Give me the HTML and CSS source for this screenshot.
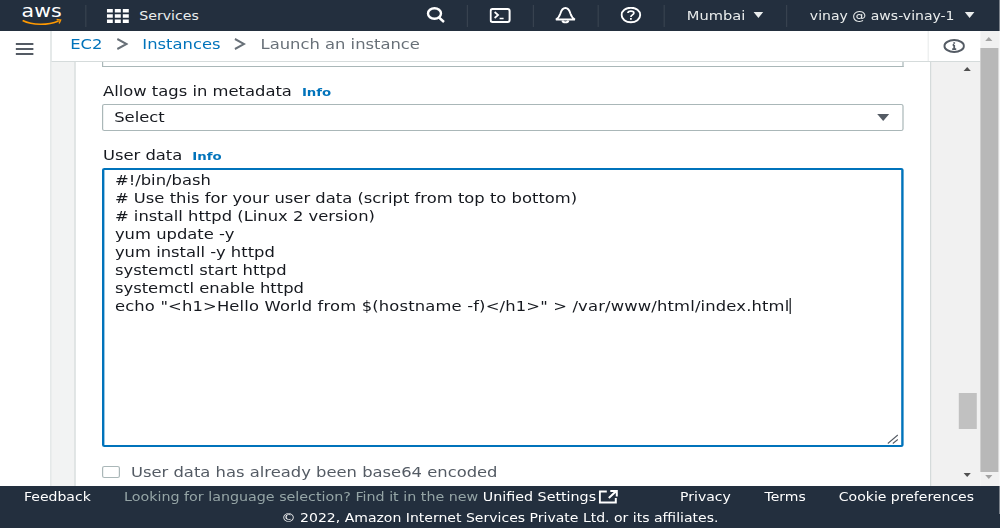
FILE: index.html
```html
<!DOCTYPE html>
<html lang="en">
<head>
<meta charset="utf-8">
<title>Launch an instance</title>
<link rel="stylesheet" href="styles.css">
</head>
<body>
<div class="app">
  <header class="topbar">
    <div class="cell logo-cell">
      <svg class="aws" viewBox="0 0 42 24" width="35" height="24" preserveAspectRatio="none">
        <text x="0" y="13" class="aws-text" textLength="40" lengthAdjust="spacingAndGlyphs">aws</text>
        <path d="M1 16.500c10 5 25 5 36 .5" fill="none" stroke="#f90" stroke-width="1.600"/>
        <path d="M35 15.500l4 .5-1.500 3.500" fill="none" stroke="#f90" stroke-width="1.400"/>
      </svg>
    </div>
    <div class="cell services-cell">
      <svg viewBox="0 0 22 14" width="18.330" height="14" preserveAspectRatio="none" fill="#fff">
        <rect x="0" y="0" width="6" height="3.500"/><rect x="8" y="0" width="6" height="3.500"/><rect x="16" y="0" width="6" height="3.500"/>
        <rect x="0" y="5.250" width="6" height="3.500"/><rect x="8" y="5.250" width="6" height="3.500"/><rect x="16" y="5.250" width="6" height="3.500"/>
        <rect x="0" y="10.500" width="6" height="3.500"/><rect x="8" y="10.500" width="6" height="3.500"/><rect x="16" y="10.500" width="6" height="3.500"/>
      </svg>
      <span class="services">Services</span>
    </div>
    <div class="cell search-cell">
      <svg viewBox="0 0 20 18" width="16.670" height="18" preserveAspectRatio="none" fill="none" stroke="#fff" stroke-width="2.400">
        <ellipse cx="8.500" cy="6.500" rx="6.500" ry="5.300"/><path d="M13 10.500l5 4.500"/>
      </svg>
    </div>
    <div class="cell icon-cell">
      <svg viewBox="0 0 21 16" width="17.500" height="16" preserveAspectRatio="none" fill="none" stroke="#fff" stroke-width="2">
        <rect x="1" y="1" width="19" height="13" rx="2"/><path d="M5 4l3.500 3-3.500 3M10 10.500h4" stroke-width="1.700"/>
      </svg>
    </div>
    <div class="cell icon-cell">
      <svg viewBox="0 0 22 18" width="18.330" height="18" preserveAspectRatio="none" fill="none" stroke="#fff" stroke-width="1.900">
        <path d="M1.500 12.500c2-1 3.500-3 4.500-6 1-3.500 3-5.500 5-5.500s4 2 5 5.500c1 3 2.500 5 4.500 6z"/><path d="M8 13.500c.4 2.500 5.600 2.500 6 0"/>
      </svg>
    </div>
    <div class="cell icon-cell">
      <svg viewBox="0 0 21 18" width="17.500" height="18" preserveAspectRatio="none" fill="none" stroke="#fff" stroke-width="1.900">
        <ellipse cx="10.500" cy="8" rx="9.300" ry="7.300"/><path d="M7.500 6c0-2.600 6-2.600 6 0 0 2-3 1.800-3 4" stroke-width="1.700"/><path d="M10.500 11v1.700" stroke-width="1.800"/>
      </svg>
    </div>
    <div class="cell region-cell">
      <span>Mumbai</span><span class="caret"></span>
    </div>
    <div class="cell user-cell">
      <span>vinay @ aws-vinay-1</span><span class="caret"></span>
    </div>
  </header>

  <div class="middle">
    <aside class="sidenav">
      <svg viewBox="0 0 20 12" width="15.830" height="12" preserveAspectRatio="none" stroke="#545b64" stroke-width="1.800">
        <path d="M0 1h19M0 6h19M0 11h19"/>
      </svg>
    </aside>
    <div class="workspace">
      <nav class="crumbbar">
        <div class="crumbs">
          <a>EC2</a>
          <svg viewBox="0 0 13 12" width="10" height="12" preserveAspectRatio="none" fill="none" stroke="#687078" stroke-width="2"><path d="M1 1l10 5-10 5"/></svg>
          <a>Instances</a>
          <svg viewBox="0 0 13 12" width="10" height="12" preserveAspectRatio="none" fill="none" stroke="#687078" stroke-width="2"><path d="M1 1l10 5-10 5"/></svg>
          <span>Launch an instance</span>
        </div>
        <div class="info-cell">
          <svg viewBox="0 0 22 14" width="18.330" height="14" preserveAspectRatio="none" fill="none" stroke="#545b64" stroke-width="2">
            <ellipse cx="11" cy="7" rx="9.800" ry="5.900"/><path d="M11 6v4M9 10.200h4M9.500 6H11M11 3.300v1.400" stroke-width="1.800"/>
          </svg>
        </div>
      </nav>
      <div class="content-row">
        <div class="gutter"></div>
        <main class="panel">
          <div class="prev-input"></div>
          <div class="field">
            <div class="label">Allow tags in metadata<a class="info">Info</a></div>
            <div class="select"><span>Select</span><span class="select-caret"></span></div>
          </div>
          <div class="field">
            <div class="label">User data<a class="info">Info</a></div>
            <div class="textarea">
              <div class="line">#!/bin/bash</div>
              <div class="line"># Use this for your user data (script from top to bottom)</div>
              <div class="line"># install httpd (Linux 2 version)</div>
              <div class="line">yum update -y</div>
              <div class="line">yum install -y httpd</div>
              <div class="line">systemctl start httpd</div>
              <div class="line">systemctl enable httpd</div>
              <div class="line long">echo "&lt;h1&gt;Hello World from $(hostname -f)&lt;/h1&gt;" &gt; /var/www/html/index.html<span class="text-caret"></span></div>
              <svg class="resize" viewBox="0 0 12 10" width="10" height="10" preserveAspectRatio="none" stroke="#545b64" stroke-width="1"><path d="M1 9.500L11 1M6 9.500L11 5.500"/></svg>
            </div>
          </div>
          <label class="check"><span class="box"></span>User data has already been base64 encoded</label>
        </main>
        <div class="inner-scroll">
          <span class="arrow-up"></span>
          <span class="thumb"></span>
          <span class="arrow-down"></span>
        </div>
      </div>
    </div>
    <div class="outer-scroll">
      <span class="arrow-up light"></span>
      <span class="outer-thumb"></span>
      <span class="arrow-down light"></span>
    </div>
  </div>

  <footer class="footer">
    <div class="foot-row">
      <a class="feedback">Feedback</a>
      <span class="lang">Looking for language selection? Find it in the new <b>Unified Settings</b></span>
      <svg class="ext" viewBox="0 0 19 14" width="15.830" height="14" preserveAspectRatio="none" fill="none" stroke="#fff" stroke-width="2"><path d="M8 1.500H1v11h16V8M10 8l7-6.500M11.500 1H18v5.500"/></svg>
      <a class="privacy">Privacy</a>
      <a class="terms">Terms</a>
      <a class="cookies">Cookie preferences</a>
    </div>
    <div class="copy">© 2022, Amazon Internet Services Private Ltd. or its affiliates.</div>
  </footer>
</div>
</body>
</html>
```

FILE: styles.css
```css
* { box-sizing: border-box; }
html, body { margin: 0; height: 100%; overflow: hidden; }
body { font-family: "DejaVu Sans", sans-serif; font-size: 13.650px; color: #16191f; background: #fff; }

/* The reference is stretched 1.2x horizontally: lay out at 833.33px and widen. */
.app { width: 833.330px; height: 528px; display: flex; flex-direction: column; transform: scaleX(1.2); transform-origin: left top; }

.topbar { height: 31px; flex: none; background: #232f3e; color: #eaeded; display: flex; align-items: center; font-size: 11.800px; }
.cell { display: flex; align-items: center; height: 22px; border-left: 1px solid #37424f; }
.logo-cell { width: 70.830px; padding-left: 18.330px; border-left: 0; }
.aws { overflow: visible; }
.aws-text { font-family: "DejaVu Sans", sans-serif; font-size: 17px; fill: #fff; }
.services-cell { width: 284.170px; padding-left: 17.500px; gap: 8.330px; }
.search-cell { width: 34.170px; border-left: 0; }
.icon-cell { width: 54.580px; justify-content: center; }
.region-cell { width: 102.500px; padding-left: 18.500px; gap: 6.670px; font-size: 12.200px; }
.user-cell { flex: 1; padding-left: 18.500px; gap: 8.330px; font-size: 11.700px; }
.caret { width: 0; height: 0; margin-bottom: 1px; border-left: 4.580px solid transparent; border-right: 4.580px solid transparent; border-top: 6px solid #eaeded; }

.middle { flex: 1; min-height: 0; display: flex; }
.sidenav { width: 42.500px; flex: none; border-right: 1px solid #d5dbdb; padding: 11px 0 0 12.500px; }
.workspace { flex: 1; min-width: 0; display: flex; flex-direction: column; }
.crumbbar { height: 31px; flex: none; display: flex; justify-content: space-between; border-bottom: 1px solid #d5dbdb; }
.crumbs { display: flex; align-items: center; gap: 11.670px; padding: 0 0 4px 16px; color: #687078; }
.crumbs a { color: #0073bb; }
.info-cell { width: 44.170px; border-left: 1px solid #eaeded; display: flex; align-items: center; justify-content: center; }

.content-row { flex: 1; min-height: 0; display: flex; }
.gutter { width: 20.830px; flex: none; background: #f2f3f3; border-right: 1px solid #d5dbdb; }
.panel { flex: 1; min-width: 0; padding: 0 21.670px; }
.prev-input { height: 5px; border: 1px solid #aab7b8; border-top: 0; }
.field { margin-top: 15px; }
.label { height: 18px; line-height: 18px; padding-left: 0.800px; display: flex; align-items: baseline; }
.info { color: #0073bb; font-size: 11.100px; font-weight: 700; margin-left: 8.330px; }
.select { margin-top: 4px; height: 27px; border: 1px solid #aab7b8; border-radius: 2px; display: flex; align-items: center; justify-content: space-between; padding: 0 11.670px 2px 9.170px; }
.select-caret { width: 0; height: 0; margin-top: 2px; border-left: 5.830px solid transparent; border-right: 5.830px solid transparent; border-top: 7px solid #545b64; }
.textarea { position: relative; margin-top: 4px; height: 279px; border: 2px solid #0073bb; border-radius: 2px; padding: 1px 8.800px; line-height: 18px; }
.line { white-space: nowrap; }
.long { letter-spacing: 0.130px; }
.text-caret { display: inline-block; width: 1.200px; height: 16px; background: #16191f; vertical-align: -3px; }
.resize { position: absolute; right: 2px; bottom: 1px; }
.check { display: flex; align-items: center; gap: 9.170px; margin-top: 16px; color: #545b64; line-height: 18px; }
.box { width: 15px; height: 12px; border: 1px solid #aab7b8; border-radius: 2px; }

.inner-scroll { width: 41.670px; flex: none; background: #f1f1f1; border-left: 1px solid #d5dbdb; padding-left: 22.500px; display: flex; flex-direction: column; }
.thumb { width: 15px; height: 36px; background: #c1c1c1; margin-top: 322px; }
.arrow-up, .arrow-down { width: 0; height: 0; border-left: 3.500px solid transparent; border-right: 3.500px solid transparent; display: block; margin-left: 4px; }
.arrow-up { border-bottom: 4px solid #505050; margin-top: 5px; }
.arrow-down { border-top: 4px solid #505050; margin-top: 44px; }

.outer-scroll { width: 16.670px; flex: none; background: #f1f1f1; display: flex; flex-direction: column; }
.outer-scroll .arrow-up { margin-top: 6px; }
.outer-scroll .arrow-down { margin-top: 3px; }
.light.arrow-up { border-bottom-color: #a3a3a3; }
.light.arrow-down { border-top-color: #a3a3a3; }
.outer-thumb { width: 15px; height: 424px; background: #b8b8b8; margin-top: 7px; }

.footer { height: 42px; flex: none; background: #232f3e; color: #fff; font-size: 11.700px; }
.foot-row { display: flex; align-items: center; height: 22px; }
.feedback { margin-left: 20px; width: 83.330px; }
.lang { color: #95a5a6; font-size: 11.900px; }
.lang b { color: #fff; font-weight: 400; }
.ext { margin-left: 2.500px; }
.privacy { margin-left: 51.670px; }
.terms { margin-left: 28px; }
.cookies { margin-left: 27.500px; }
.copy { text-align: center; line-height: 18px; padding-top: 1px; }
```
